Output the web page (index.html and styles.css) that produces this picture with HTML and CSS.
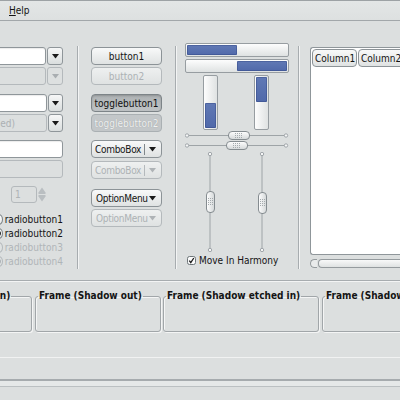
FILE: index.html
```html
<!DOCTYPE html>
<html>
<head>
<meta charset="utf-8">
<link rel="stylesheet" href="styles.css">
</head>
<body>
<div class="topline"></div>
<div class="menubar"><span class="menuitem"><span class="mn">H</span>elp</span></div>
<div class="main">
  <div class="col col1">
    <div class="erow"><div class="entry"></div><div class="abtn"><svg width="7" height="5" viewBox="0 0 7 5"><path d="M0 0H7L3.5 4.5Z" fill="#1a1a1a"/></svg></div></div>
    <div class="erow r2"><div class="entry dis"></div><div class="abtn dis"><svg width="7" height="5" viewBox="0 0 7 5"><path d="M0 0H7L3.5 4.5Z" fill="#a9aeb1"/></svg></div></div>
    <div class="erow narrow r3"><div class="entry"></div><div class="abtn"><svg width="7" height="5" viewBox="0 0 7 5"><path d="M0 0H7L3.5 4.5Z" fill="#1a1a1a"/></svg></div></div>
    <div class="erow narrow r2"><div class="entry dis"><span class="etext">(disabled)</span></div><div class="abtn"><svg width="7" height="5" viewBox="0 0 7 5"><path d="M0 0H7L3.5 4.5Z" fill="#1a1a1a"/></svg></div></div>
    <div class="erow r5"><div class="entry"></div></div>
    <div class="erow r2"><div class="entry dis"></div></div>
    <div class="spin">
      <div class="spinentry">1</div>
      <svg width="8" height="17" viewBox="0 0 8 17"><path d="M4 1.5L7.5 6.5V8H0.5V6.5Z" fill="#b9bec1"/><path d="M0.5 9H7.5V10.5L4 15.5L0.5 10.5Z" fill="#b9bec1"/></svg>
    </div>
    <div class="radios">
      <div class="radio"><span class="rc"></span><span>radiobutton1</span></div>
      <div class="radio"><span class="rc on"></span><span>radiobutton2</span></div>
      <div class="radio dis"><span class="rc"></span><span>radiobutton3</span></div>
      <div class="radio dis"><span class="rc on"></span><span>radiobutton4</span></div>
    </div>
  </div>
  <div class="vsep s1"></div>
  <div class="col col2">
    <div class="btn">button1</div>
    <div class="btn dis b2">button2</div>
    <div class="btn tog b3">togglebutton1</div>
    <div class="btn tog dis b2">togglebutton2</div>
    <div class="btn combo b5"><span class="ctext">ComboBox</span><span class="csep"></span><svg width="7" height="5" viewBox="0 0 7 5"><path d="M0 0H7L3.5 4.5Z" fill="#1a1a1a"/></svg></div>
    <div class="btn combo dis b6"><span class="ctext">ComboBox</span><span class="csep"></span><svg width="7" height="5" viewBox="0 0 7 5"><path d="M0 0H7L3.5 4.5Z" fill="#aeb3b6"/></svg></div>
    <div class="btn combo opt b7"><span class="ctext">OptionMenu</span><svg width="7" height="5" viewBox="0 0 7 5"><path d="M0 0H7L3.5 4.5Z" fill="#1a1a1a"/></svg></div>
    <div class="btn combo opt dis b2"><span class="ctext">OptionMenu</span><svg width="7" height="5" viewBox="0 0 7 5"><path d="M0 0H7L3.5 4.5Z" fill="#aeb3b6"/></svg></div>
  </div>
  <div class="vsep s2"></div>
  <div class="col col3">
    <div class="pbar"><div class="fill" style="width:50%"></div></div>
    <div class="pbar end"><div class="fill" style="width:50%"></div></div>
    <div class="vrow">
      <div class="vbar v1"><div class="fill" style="height:49%"></div></div>
      <div class="vbar v2 top"><div class="fill" style="height:49%"></div></div>
    </div>
    <svg class="hscale" width="104" height="9" viewBox="0 0 104 9">
      <defs><linearGradient id="k1" x1="0" y1="0" x2="0" y2="1"><stop offset="0" stop-color="#ffffff"/><stop offset="1" stop-color="#d3d7d8"/></linearGradient></defs>
      <line x1="2" y1="4.5" x2="101" y2="4.5" stroke="#9ea4a7"/>
      <circle cx="2" cy="4.5" r="1.7" fill="#f5f6f6" stroke="#8f969a" stroke-width="0.8"/>
      <circle cx="101" cy="4.5" r="1.7" fill="#f5f6f6" stroke="#8f969a" stroke-width="0.8"/>
      <rect x="43.5" y="0.5" width="21" height="8" rx="3.5" fill="url(#k1)" stroke="#858c90"/>
      <g stroke="#a4aaad" stroke-dasharray="1 1"><line x1="50.5" y1="2" x2="50.5" y2="7"/><line x1="52.5" y1="2" x2="52.5" y2="7"/><line x1="54.5" y1="2" x2="54.5" y2="7"/><line x1="56.5" y1="2" x2="56.5" y2="7"/></g>
    </svg>
    <svg class="hscale h2" width="104" height="9" viewBox="0 0 104 9">
      <defs><linearGradient id="k2" x1="0" y1="0" x2="0" y2="1"><stop offset="0" stop-color="#ffffff"/><stop offset="1" stop-color="#d3d7d8"/></linearGradient></defs>
      <line x1="2" y1="4.5" x2="101" y2="4.5" stroke="#9ea4a7"/>
      <circle cx="2" cy="4.5" r="1.7" fill="#f5f6f6" stroke="#8f969a" stroke-width="0.8"/>
      <circle cx="101" cy="4.5" r="1.7" fill="#f5f6f6" stroke="#8f969a" stroke-width="0.8"/>
      <rect x="41.5" y="0.5" width="21" height="8" rx="3.5" fill="url(#k2)" stroke="#858c90"/>
      <g stroke="#a4aaad" stroke-dasharray="1 1"><line x1="48.5" y1="2" x2="48.5" y2="7"/><line x1="50.5" y1="2" x2="50.5" y2="7"/><line x1="52.5" y1="2" x2="52.5" y2="7"/><line x1="54.5" y1="2" x2="54.5" y2="7"/></g>
    </svg>
    <div class="vscales">
      <svg class="vs1" width="10" height="100" viewBox="0 0 10 100">
        <defs><linearGradient id="k3" x1="0" y1="0" x2="1" y2="0"><stop offset="0" stop-color="#ffffff"/><stop offset="1" stop-color="#d3d7d8"/></linearGradient></defs>
        <line x1="5" y1="2" x2="5" y2="98" stroke="#9ea4a7"/>
        <circle cx="5" cy="2" r="1.7" fill="#f5f6f6" stroke="#8f969a" stroke-width="0.8"/>
        <circle cx="5" cy="98" r="1.7" fill="#f5f6f6" stroke="#8f969a" stroke-width="0.8"/>
        <rect x="1.5" y="39.5" width="8" height="21" rx="3.5" fill="url(#k3)" stroke="#858c90"/>
        <g stroke="#a4aaad" stroke-dasharray="1 1"><line x1="3" y1="46.5" x2="8" y2="46.5"/><line x1="3" y1="48.5" x2="8" y2="48.5"/><line x1="3" y1="50.5" x2="8" y2="50.5"/><line x1="3" y1="52.5" x2="8" y2="52.5"/></g>
      </svg>
      <svg class="vs2" width="10" height="100" viewBox="0 0 10 100">
        <defs><linearGradient id="k4" x1="0" y1="0" x2="1" y2="0"><stop offset="0" stop-color="#ffffff"/><stop offset="1" stop-color="#d3d7d8"/></linearGradient></defs>
        <line x1="5" y1="2" x2="5" y2="98" stroke="#9ea4a7"/>
        <circle cx="5" cy="2" r="1.7" fill="#f5f6f6" stroke="#8f969a" stroke-width="0.8"/>
        <circle cx="5" cy="98" r="1.7" fill="#f5f6f6" stroke="#8f969a" stroke-width="0.8"/>
        <rect x="1.5" y="40.5" width="8" height="21" rx="3.5" fill="url(#k4)" stroke="#858c90"/>
        <g stroke="#a4aaad" stroke-dasharray="1 1"><line x1="3" y1="47.5" x2="8" y2="47.5"/><line x1="3" y1="49.5" x2="8" y2="49.5"/><line x1="3" y1="51.5" x2="8" y2="51.5"/><line x1="3" y1="53.5" x2="8" y2="53.5"/></g>
      </svg>
    </div>
    <div class="check"><svg width="9" height="9" viewBox="0 0 9 9"><rect x="0.5" y="0.5" width="8" height="8" rx="2" fill="#fbfbfb" stroke="#6d7579"/><path d="M2.3 4.6L3.8 6.6L6.8 2" fill="none" stroke="#1a1a1a" stroke-width="1.3"/></svg><span>Move In Harmony</span></div>
  </div>
  <div class="vsep s3"></div>
  <div class="col col4">
    <div class="tree">
      <div class="thead"><div class="th c1">Column1</div><div class="th c2">Column2</div></div>
    </div>
    <div class="hscroll"><div class="scap"></div><div class="sthumb"></div></div>
  </div>
</div>
<div class="hsep"></div>
<div class="frames">
  <fieldset class="frame f1"><legend>Frame (Shadow in)</legend></fieldset>
  <fieldset class="frame f2"><legend>Frame (Shadow out)</legend></fieldset>
  <fieldset class="frame f3"><legend>Frame (Shadow etched in)</legend></fieldset>
  <fieldset class="frame f4"><legend>Frame (Shadow etched out)</legend></fieldset>
</div>
<div class="bline1"></div>
<div class="bline2"></div>
<div class="bstrip"></div>
</body>
</html>
```
FILE: styles.css
```css
body {
  margin: 0;
  width: 400px;
  height: 400px;
  overflow: hidden;
  background: #dcdfdf;
  font-family: "DejaVu Sans Condensed", "DejaVu Sans", sans-serif;
  font-size: 10px;
  color: #141414;
}
.topline { height: 1px; background: #9da2a5; }
.menubar {
  height: 19px;
  border-bottom: 1px solid #a2a7aa;
  background: linear-gradient(#e3e6e6, #dde0e0);
  display: flex;
  align-items: center;
  padding-left: 9px;
}
.mn { text-decoration: underline; }
.main { display: flex; align-items: flex-start; height: 259px; }
.col { display: flex; flex-direction: column; flex: none; }
.vsep {
  flex: none;
  width: 1px;
  height: 223px;
  margin-top: 25px;
  background: #a7acaf;
  border-right: 1px solid #f3f4f4;
}
.s1 { margin-left: 14px; }
.s2 { margin-left: 13px; }
.s3 { margin-left: 9px; }

/* column 1 */
.col1 { width: 63px; margin-top: 26px; }
.erow { display: flex; gap: 1px; height: 18px; margin-left: -34px; }
.erow.r2 { margin-top: 2px; }
.erow.r3 { margin-top: 9px; }
.erow.r5 { margin-top: 8px; }
.entry {
  flex: 1;
  box-sizing: border-box;
  height: 18px;
  background: #fff;
  border: 1px solid #8f969a;
  border-radius: 3px;
  box-shadow: inset 0 1px 1px rgba(0,0,0,0.08);
  display: flex;
  align-items: center;
  padding-left: 3px;
}
.entry.dis { background: #dcdfdf; border-color: #b4b9bc; box-shadow: none; }
.etext { color: #abb0b3; }
.abtn {
  width: 16px;
  flex: none;
  box-sizing: border-box;
  border: 1px solid #8f969a;
  border-radius: 3px;
  background: linear-gradient(#f6f7f7, #dadede);
  display: flex;
  align-items: center;
  justify-content: center;
}
.narrow .abtn { width: 15px; }
.abtn.dis { border-color: #b4b9bc; background: #dde0e0; }
.spin { display: flex; align-items: center; margin-top: 8px; margin-left: 11px; height: 17px; gap: 1px; }
.spinentry {
  width: 26px;
  height: 17px;
  box-sizing: border-box;
  border: 1px solid #b4b9bc;
  border-radius: 3px;
  color: #aeb3b6;
  padding-left: 3px;
  display: flex;
  align-items: center;
}
.radios { margin-top: 9px; margin-left: -6px; }
.radio { display: flex; align-items: center; height: 14px; gap: 2px; }
.rc {
  width: 11px;
  height: 11px;
  box-sizing: border-box;
  border-radius: 50%;
  border: 1px solid #7c8488;
  background: linear-gradient(#ffffff, #e6e8e8);
  display: flex;
  align-items: center;
  justify-content: center;
}
.rc.on::after { content: ""; width: 5px; height: 5px; border-radius: 50%; background: #2c2f30; }
.radio.dis { color: #b0b5b8; }
.radio.dis .rc { border-color: #b4b9bc; background: #dfe2e2; }
.radio.dis .rc.on::after { background: #aeb3b6; }

/* column 2 */
.col2 { width: 71px; margin-left: 12px; margin-top: 26px; }
.btn {
  height: 18px;
  box-sizing: border-box;
  border: 1px solid #8c9397;
  border-radius: 4px;
  background: linear-gradient(#f8f9f9, #dfe2e2);
  display: flex;
  align-items: center;
  justify-content: center;
}
.btn.dis { border-color: #b4b9bc; color: #adb2b5; background: linear-gradient(#eef0f0, #dfe2e2); }
.b2 { margin-top: 2px; }
.b3 { margin-top: 9px; }
.b5 { margin-top: 8px; }
.b6 { margin-top: 3px; }
.b7 { margin-top: 10px; }
.btn.tog {
  background: linear-gradient(#aeb2b4, #bfc3c5);
  border-color: #7d8488;
  box-shadow: inset 0 1px 2px rgba(0,0,0,0.18);
  color: #111;
}
.btn.tog.dis {
  background: #c3c7c9;
  border-color: #aab0b3;
  color: #eff1f1;
  box-shadow: none;
  text-shadow: 0 0 1px rgba(0,0,0,0.25);
}
.combo { justify-content: flex-start; padding: 0 5px 0 3px; }
.ctext { letter-spacing: -0.3px; white-space: nowrap; }
.combo .csep { flex: none; width: 1px; height: 11px; background: #80878b; margin-left: auto; margin-right: 4px; }
.combo svg { flex: none; }
.combo.dis .csep { background: #b4b9bc; }
.combo.opt { padding-left: 4px; justify-content: space-between; }

/* column 3 */
.col3 { width: 104px; margin-left: 8px; margin-top: 22px; }
.pbar {
  height: 14px;
  box-sizing: border-box;
  border: 1px solid #979da1;
  border-radius: 2px;
  background: linear-gradient(#fdfdfd, #dfe2e2);
  padding: 1px;
  display: flex;
}
.pbar.end { margin-top: 2px; justify-content: flex-end; }
.fill { background: linear-gradient(#6179b5, #5069aa); border-radius: 1px; box-shadow: inset 0 0 0 1px rgba(40,60,120,0.35); }
.vrow { display: flex; height: 55px; margin-top: 2px; }
.vbar {
  flex: none;
  width: 15px;
  box-sizing: border-box;
  border: 1px solid #979da1;
  border-radius: 2px;
  background: linear-gradient(90deg, #fdfdfd, #dfe2e2);
  padding: 1px;
  display: flex;
  flex-direction: column;
  justify-content: flex-end;
}
.vbar.top { justify-content: flex-start; }
.v1 { margin-left: 18px; }
.v2 { margin-left: 36px; }
.hscale { display: block; margin-top: 1px; }
.hscale.h2 { margin-top: 1px; }
.vscales { display: flex; height: 100px; margin-top: 2px; }
.vscales svg { flex: none; }
.vs1 { margin-left: 20px; }
.vs2 { margin-left: 42px; }
.check { display: flex; align-items: center; height: 12px; margin-top: 2px; margin-left: 2px; gap: 3px; }
.check svg { flex: none; }

/* column 4 */
.col4 { width: 100px; margin-left: 10px; margin-top: 26px; }
.tree {
  height: 208px;
  box-sizing: border-box;
  background: #fff;
  border: 1px solid #8f969a;
  border-right: none;
  border-radius: 3px 0 0 3px;
  padding: 1px;
}
.thead { display: flex; height: 18px; }
.th {
  flex: none;
  box-sizing: border-box;
  border: 1px solid #8c9397;
  border-radius: 4px;
  background: linear-gradient(#f8f9f9, #dfe2e2);
  display: flex;
  align-items: center;
  padding-left: 2px;
}
.c1 { width: 45px; }
.c2 { width: 60px; margin-left: 1px; }
.hscroll { display: flex; height: 9px; margin-top: 4px; }
.scap {
  flex: none;
  width: 7px;
  box-sizing: border-box;
  border: 1px solid #959b9e;
  border-right: none;
  border-radius: 5px 0 0 5px;
  background: #e9ebeb;
}
.sthumb {
  flex: 1;
  margin-left: 1px;
  box-sizing: border-box;
  border: 1px solid #959b9e;
  border-right: none;
  border-radius: 4px 0 0 4px;
  background: linear-gradient(#f8f9f9, #dfe2e2);
}

/* bottom */
.hsep { height: 1px; background: #a7acaf; border-bottom: 1px solid #f3f4f4; }
.frames { display: flex; margin-left: -89px; margin-top: 8px; }
.frame {
  flex: none;
  margin: 0;
  padding: 0;
  box-sizing: border-box;
  height: 42px;
  border: 1px solid #a1a6a9;
  border-radius: 3px;
  box-shadow: inset 1px 1px 0 #f4f5f5, 1px 1px 0 #f4f5f5;
  min-width: 0;
}
.frame legend {
  padding: 0 1px;
  margin-left: 2px;
  font-weight: bold;
  line-height: 12px;
  white-space: nowrap;
}
.f1 { width: 121px; }
.f2 { width: 126px; margin-left: 3px; }
.f3 { width: 156px; margin-left: 2px; }
.f4 { width: 140px; margin-left: 3px; }
.bline1 { height: 1px; margin-top: 25px; background: #f1f2f2; }
.bline2 { height: 2px; margin-top: 21px; background: #a6abae; }
.bstrip { height: 5px; background: #e5e8e8; border-bottom: 1px solid #bbc0c2; }
```
